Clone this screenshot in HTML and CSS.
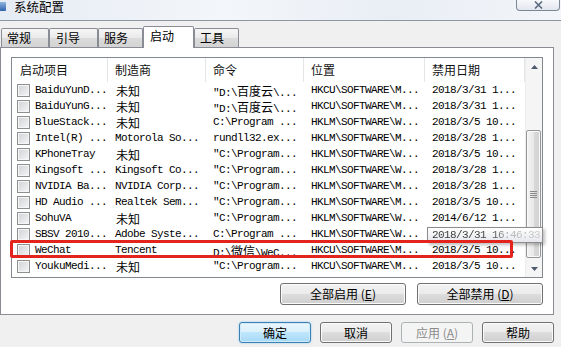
FILE: index.html
```html
<!DOCTYPE html>
<html lang="zh-CN">
<head>
<meta charset="utf-8">
<title>系统配置</title>
<link rel="stylesheet" href="styles.css">
</head>
<body>
<div class="titlebar">
  <span class="appicon"></span>
  <span class="title">系统配置</span>
  <div class="closebtn">
    <svg width="11" height="8" viewBox="0 0 11 8"><path d="M2 0.5 L9 7.5 M9 0.5 L2 7.5" stroke="#5c6b7e" stroke-width="1.6" fill="none"/></svg>
  </div>
</div>
<div class="tabstrip">
  <div class="tab w48">常规</div>
  <div class="tab w49">引导</div>
  <div class="tab w45">服务</div>
  <div class="tab sel">启动</div>
  <div class="tab w45">工具</div>
</div>
<div class="panel">
  <div class="listbox">
    <div class="listmain">
      <div class="hdr">
        <div class="h1">启动项目</div>
        <div>制造商</div>
        <div>命令</div>
        <div>位置</div>
        <div>禁用日期</div>
      </div>
      <div class="row"><span class="c1"><i class="cb"></i>BaiduYunD...</span><span class="cj2">未知</span><span>"D:\<b class="cj">百度云</b>\...</span><span>HKCU\SOFTWARE\M...</span><span>2018/3/31 1...</span></div>
      <div class="row"><span class="c1"><i class="cb"></i>BaiduYunG...</span><span class="cj2">未知</span><span>"D:\<b class="cj">百度云</b>\...</span><span>HKCU\SOFTWARE\M...</span><span>2018/3/31 1...</span></div>
      <div class="row"><span class="c1"><i class="cb"></i>BlueStack...</span><span class="cj2">未知</span><span>C:\Program ...</span><span>HKLM\SOFTWARE\W...</span><span>2018/3/5 10...</span></div>
      <div class="row"><span class="c1"><i class="cb"></i>Intel(R) ...</span><span>Motorola So...</span><span>rundll32.ex...</span><span>HKLM\SOFTWARE\M...</span><span>2018/3/28 1...</span></div>
      <div class="row"><span class="c1"><i class="cb"></i>KPhoneTray</span><span class="cj2">未知</span><span>"C:\Program...</span><span>HKLM\SOFTWARE\W...</span><span>2018/3/5 10...</span></div>
      <div class="row"><span class="c1"><i class="cb"></i>Kingsoft ...</span><span>Kingsoft Co...</span><span>"C:\Program...</span><span>HKLM\SOFTWARE\W...</span><span>2018/3/28 1...</span></div>
      <div class="row"><span class="c1"><i class="cb"></i>NVIDIA Ba...</span><span>NVIDIA Corp...</span><span>"C:\Program...</span><span>HKLM\SOFTWARE\M...</span><span>2018/3/28 1...</span></div>
      <div class="row"><span class="c1"><i class="cb"></i>HD Audio ...</span><span>Realtek Sem...</span><span>"C:\Program...</span><span>HKLM\SOFTWARE\M...</span><span>2018/3/5 10...</span></div>
      <div class="row"><span class="c1"><i class="cb"></i>SohuVA</span><span class="cj2">未知</span><span>"C:\Program...</span><span>HKLM\SOFTWARE\W...</span><span>2014/6/12 1...</span></div>
      <div class="row"><span class="c1"><i class="cb"></i>SBSV 2010...</span><span>Adobe Syste...</span><span>C:\Program ...</span><span>HKLM\SOFTWARE\W...</span><span class="under"></span></div>
      <div class="row"><span class="c1"><i class="cb"></i>WeChat</span><span>Tencent</span><span>D:\<b class="cj">微信</b>\WeC...</span><span>HKCU\SOFTWARE\M...</span><span>2018/3/5 10...</span></div>
      <div class="row"><span class="c1"><i class="cb"></i>YoukuMedi...</span><span class="cj2">未知</span><span>"C:\Program...</span><span>HKCU\SOFTWARE\M...</span><span>2018/3/5 10...</span></div>
    </div>
    <div class="vscroll">
      <div class="sbtn"><svg width="7" height="4" viewBox="0 0 7 4"><path d="M0 4 L3.5 0 L7 4 Z" fill="#4d5a6c"/></svg></div>
      <div class="track">
        <div class="thumb">
          <svg width="7" height="7" viewBox="0 0 7 7"><path d="M0 0.5H7M0 2.5H7M0 4.5H7M0 6.5H7" stroke="#8a8a8a" stroke-width="1"/></svg>
        </div>
      </div>
      <div class="sbtn"><svg width="7" height="4" viewBox="0 0 7 4"><path d="M0 0 L3.5 4 L7 0 Z" fill="#4d5a6c"/></svg></div>
    </div>
  </div>
  <div class="panelbtns">
    <div class="btn wide">全部启用 (<u>E</u>)</div>
    <div class="btn wide">全部禁用 (<u>D</u>)</div>
  </div>
</div>
<div class="dlgbtns">
  <div class="btn dlg default">确定</div>
  <div class="btn dlg">取消</div>
  <div class="btn dlg disabled">应用 (<u>A</u>)</div>
  <div class="btn dlg">帮助</div>
</div>
<div class="tooltip"><span class="tiptext">2018/3/31 16:46:33</span></div>
<div class="redbox"></div>
</body>
</html>
```
FILE: styles.css
```css
body {
  margin: 0;
  width: 561px;
  height: 347px;
  overflow: hidden;
  background: #f0f0f0;
  font-family: "Noto Sans CJK SC", "Liberation Sans", sans-serif;
  font-size: 12px;
  color: #000;
  position: relative;
}

.titlebar {
  height: 20px;
  border-bottom: 1px solid #8d97a3;
  background: linear-gradient(90deg, #e6ecf4 0%, #f3f6fa 40%, #e9eef5 70%, #f2f5f9 100%);
  display: flex;
  align-items: flex-start;
}
.appicon {
  width: 6px;
  height: 9px;
  margin-top: 2px;
  background: linear-gradient(#8fb4e0, #2f62ad);
  border-radius: 0 1px 1px 0;
  flex: none;
}
.title {
  margin-left: 8px;
  font-size: 12.5px;
  line-height: 13px;
  margin-top: 0;
}
.closebtn {
  margin-left: auto;
  margin-right: 1px;
  width: 44px;
  height: 11px;
  box-sizing: border-box;
  border: 1px solid #7d8897;
  border-top: none;
  border-radius: 0 0 4px 4px;
  background: linear-gradient(#f6f8fb, #e2e7ee);
  display: flex;
  justify-content: center;
  align-items: flex-start;
  padding-top: 1px;
}

.tabstrip {
  height: 26px;
  display: flex;
  align-items: flex-end;
  padding-left: 1px;
}
.tab {
  height: 19px;
  box-sizing: border-box;
  border: 1px solid #898c95;
  border-bottom: none;
  border-radius: 2px 2px 0 0;
  background: linear-gradient(#f6f6f6, #e9e9e9 50%, #dcdcdc 51%, #d3d3d3);
  line-height: 17px;
  padding-left: 5px;
  font-size: 12px;
  color: #000;
}
.w48 { width: 48px; }
.w49 { width: 49px; padding-left: 6px; }
.w45 { width: 45px; }
.tab.sel {
  width: 51px;
  height: 22px;
  margin-bottom: -1px;
  background: #fff;
  z-index: 2;
  padding-left: 6px;
  line-height: 18px;
}

.panel {
  box-sizing: border-box;
  width: 554px;
  height: 268px;
  border: 1px solid #898c95;
  background: #fff;
  padding: 9px 10px 0;
  display: flex;
  flex-direction: column;
}

.listbox {
  height: 221px;
  box-sizing: border-box;
  border: 1px solid #828790;
  display: flex;
  background: #fff;
}
.listmain {
  width: 513px;
  overflow: hidden;
}
.hdr {
  display: grid;
  grid-template-columns: 96px 98px 98px 121px 100px;
  height: 24px;
}
.hdr div {
  padding-left: 7px;
  line-height: 24px;
  border-right: 1px solid #e3e5e8;
  white-space: nowrap;
  font-size: 12px;
  color: #111;
}
.hdr div.h1 { padding-left: 8px; }

.row {
  display: grid;
  grid-template-columns: 96px 98px 98px 121px 100px;
  height: 16px;
  line-height: 17px;
  font-family: "Liberation Mono", "Noto Sans CJK SC", monospace;
  font-size: 11px;
  letter-spacing: -0.6px;
}
.row span {
  padding-left: 7px;
  white-space: nowrap;
  overflow: hidden;
}
.row span.c1 {
  display: flex;
  align-items: center;
  padding-left: 5px;
}
.row span.cj2 {
  font-family: "Noto Sans CJK SC", sans-serif;
  font-size: 12px;
  letter-spacing: 0;
  padding-left: 8px;
}
.cj {
  font-weight: normal;
  font-family: "Noto Sans CJK SC", sans-serif;
  font-size: 12px;
  letter-spacing: 0;
}
.cb {
  width: 13px;
  height: 13px;
  box-sizing: border-box;
  border: 1px solid #8e8f8f;
  background: linear-gradient(135deg, #cfd3d8, #f4f4f4);
  box-shadow: inset 0 0 0 1px #f6f6f6;
  margin-right: 5px;
  flex: none;
}

.vscroll {
  width: 17px;
  display: flex;
  flex-direction: column;
  background: #f5f5f5;
  border-left: 1px solid #ededed;
  box-sizing: border-box;
}
.sbtn {
  height: 17px;
  display: flex;
  align-items: center;
  justify-content: center;
  flex: none;
}
.track {
  flex: 1;
  display: flex;
  flex-direction: column;
}
.thumb {
  margin: 55px 0 0 0;
  height: 128px;
  width: 15px;
  box-sizing: border-box;
  border: 1px solid #979797;
  border-radius: 2px;
  background: linear-gradient(90deg, #f4f4f4, #e9e9e9 50%, #d9d9d9 51%, #d2d2d2);
  box-shadow: inset 0 0 0 1px #f8f8f8;
  display: flex;
  align-items: center;
  justify-content: center;
}

.panelbtns {
  display: flex;
  justify-content: flex-end;
  gap: 11px;
  margin-top: 5px;
}
.btn {
  box-sizing: border-box;
  border: 1px solid #707070;
  border-radius: 3px;
  background: linear-gradient(#f2f2f2, #ebebeb 49%, #dddddd 50%, #cfcfcf);
  box-shadow: inset 0 0 0 1px #fbfbfb;
  text-align: center;
  font-size: 12px;
  color: #000;
}
.btn u {
  text-decoration: underline;
}
.btn.wide {
  width: 126px;
  height: 22px;
  line-height: 20px;
}

.dlgbtns {
  display: flex;
  justify-content: flex-end;
  gap: 9px;
  margin-top: 7px;
  padding-right: 7px;
}
.btn.dlg {
  width: 72px;
  height: 21px;
  line-height: 19px;
}
.btn.default {
  border-color: #3c7fb1;
  background: linear-gradient(#eaf6fd, #d9f0fc 49%, #bee6fd 50%, #a7d9f5);
  box-shadow: inset 0 0 0 1px #cfeafb, 0 0 2px #7fc1ea;
}
.btn.disabled {
  border-color: #adb2b5;
  background: #f4f4f4;
  box-shadow: none;
  color: #8b8b8b;
}

.tooltip {
  position: absolute;
  left: 427px;
  top: 227px;
  width: 116px;
  height: 16px;
  box-sizing: border-box;
  border: 1px solid #8c8c8c;
  background: linear-gradient(#ffffff, #e6e7ee);
  box-shadow: 2px 2px 3px rgba(0, 0, 0, 0.25);
  padding-left: 4px;
  font-family: "Liberation Mono", monospace;
  font-size: 11px;
  letter-spacing: -0.6px;
  line-height: 14px;
  white-space: nowrap;
  overflow: hidden;
}
.tiptext {
  background: linear-gradient(90deg, #333 0%, #444 55%, #b8b8b8 72%, #c8c8c8 100%);
  -webkit-background-clip: text;
  background-clip: text;
  color: transparent;
}

.redbox {
  position: absolute;
  left: 10px;
  top: 240px;
  width: 503px;
  height: 18px;
  box-sizing: border-box;
  border: 3px solid #e3241c;
  border-radius: 2px;
}
```
